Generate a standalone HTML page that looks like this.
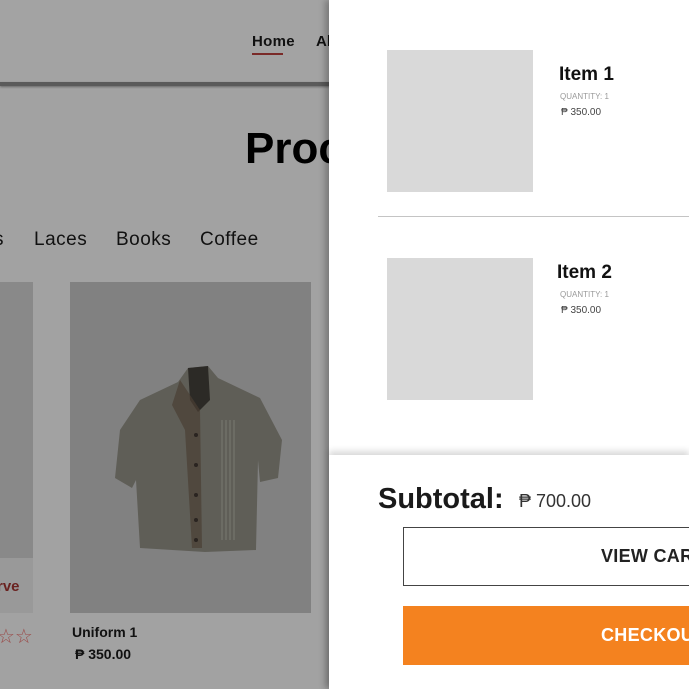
<!DOCTYPE html>
<html><head><meta charset="utf-8"><style>
*{margin:0;padding:0;box-sizing:border-box}
body{width:689px;height:689px;overflow:hidden;position:relative;background:#a2a2a2;font-family:"Liberation Sans",sans-serif}
.abs{position:absolute}
.t{color:#000;white-space:nowrap}
.c{font-size:19px;color:#111;top:229px;letter-spacing:.5px}
</style></head><body>
<div class="abs" style="left:0;top:0;width:330px;height:83px;background:#a3a3a3"></div>
<div class="abs" style="left:0;top:82px;width:330px;height:4px;background:#5a5a5a;box-shadow:0 1px 2px #666"></div>
<div class="abs t" style="left:252px;top:33px;font-size:15px;font-weight:bold;color:#111;letter-spacing:.3px">Home</div>
<div class="abs" style="left:252px;top:53px;width:31px;height:2px;background:#7a2a28"></div>
<div class="abs t" style="left:316px;top:33px;font-size:15px;font-weight:bold;color:#111">Al</div>
<div class="abs t" style="left:245px;top:124px;font-size:44px;font-weight:bold;color:#000">Proc</div>
<div class="abs t c" style="left:-6px">s</div>
<div class="abs t c" style="left:34px">Laces</div>
<div class="abs t c" style="left:116px">Books</div>
<div class="abs t c" style="left:200px">Coffee</div>
<div class="abs" style="left:0;top:282px;width:33px;height:276px;background:#898989"></div>
<div class="abs" style="left:0;top:558px;width:33px;height:55px;background:#999"></div>
<div class="abs t" style="left:-3px;top:578px;font-size:15px;font-weight:bold;color:#6a2220">rve</div>
<div class="abs t" style="left:-3px;top:624px;font-size:20px;color:#9a4a48">☆☆</div>
<div class="abs" style="left:70px;top:282px;width:241px;height:331px;background:#818181"></div>
<svg class="abs" style="left:110px;top:360px" width="175" height="200" viewBox="0 0 175 200">
<path d="M78 8 L98 6 L108 18 L150 38 L172 80 L168 118 L150 122 L148 100 L146 190 L95 192 L30 188 L26 120 L22 128 L5 118 L10 70 L30 40 L68 22 Z" fill="#5f5e57"/>
<path d="M78 8 L98 6 L100 40 L88 52 L80 40 Z" fill="#2c2a26"/>
<path d="M70 20 L90 50 L92 188 L82 188 L75 70 L62 45 Z" fill="#4a3e33" opacity=".7"/>
<g fill="#2a2420"><circle cx="86" cy="75" r="2"/><circle cx="86" cy="105" r="2"/><circle cx="86" cy="135" r="2"/><circle cx="86" cy="160" r="2"/><circle cx="86" cy="180" r="2"/></g>
<g stroke="#7a7a72" stroke-width="1"><line x1="112" y1="60" x2="112" y2="180"/><line x1="116" y1="60" x2="116" y2="180"/><line x1="120" y1="60" x2="120" y2="180"/><line x1="124" y1="60" x2="124" y2="180"/></g>
</svg>
<div class="abs t" style="left:72px;top:624px;font-size:14px;font-weight:bold;color:#111">Uniform 1</div>
<div class="abs t" style="left:75px;top:646px;font-size:14px;font-weight:bold;color:#111">₱ 350.00</div>
<div class="abs" style="left:329px;top:0;width:360px;height:689px;background:#fff;box-shadow:-4px 0 6px rgba(0,0,0,.25)"></div>
<div class="abs" style="left:387px;top:50px;width:146px;height:142px;background:#d9d9d9"></div>
<div class="abs t" style="left:559px;top:64px;font-size:19px;font-weight:bold;color:#111">Item 1</div>
<div class="abs t" style="left:560px;top:92px;font-size:8px;color:#999">QUANTITY: 1</div>
<div class="abs t" style="left:561px;top:107px;font-size:10px;color:#444">₱ 350.00</div>
<div class="abs" style="left:378px;top:216px;width:311px;height:1px;background:#c4c4c4"></div>
<div class="abs" style="left:387px;top:258px;width:146px;height:142px;background:#d9d9d9"></div>
<div class="abs t" style="left:557px;top:262px;font-size:19px;font-weight:bold;color:#111">Item 2</div>
<div class="abs t" style="left:560px;top:290px;font-size:8px;color:#999">QUANTITY: 1</div>
<div class="abs t" style="left:561px;top:305px;font-size:10px;color:#444">₱ 350.00</div>
<div class="abs" style="left:329px;top:455px;width:360px;height:234px;background:#fff;box-shadow:0 -4px 6px rgba(0,0,0,.15)"></div>
<div class="abs t" style="left:378px;top:483px;font-size:29px;font-weight:bold;color:#1a1a1a">Subtotal:</div>
<div class="abs t" style="left:519px;top:491px;font-size:18px;color:#333">₱ 700.00</div>
<div class="abs" style="left:403px;top:527px;width:300px;height:59px;border:1px solid #444;background:#fff"></div>
<div class="abs t" style="left:601px;top:546px;font-size:18px;font-weight:bold;color:#222;letter-spacing:.3px">VIEW CART</div>
<div class="abs" style="left:403px;top:606px;width:300px;height:59px;background:#f4821f"></div>
<div class="abs t" style="left:601px;top:625px;font-size:18px;font-weight:bold;color:#fff;letter-spacing:.3px">CHECKOUT</div>
</body></html>
